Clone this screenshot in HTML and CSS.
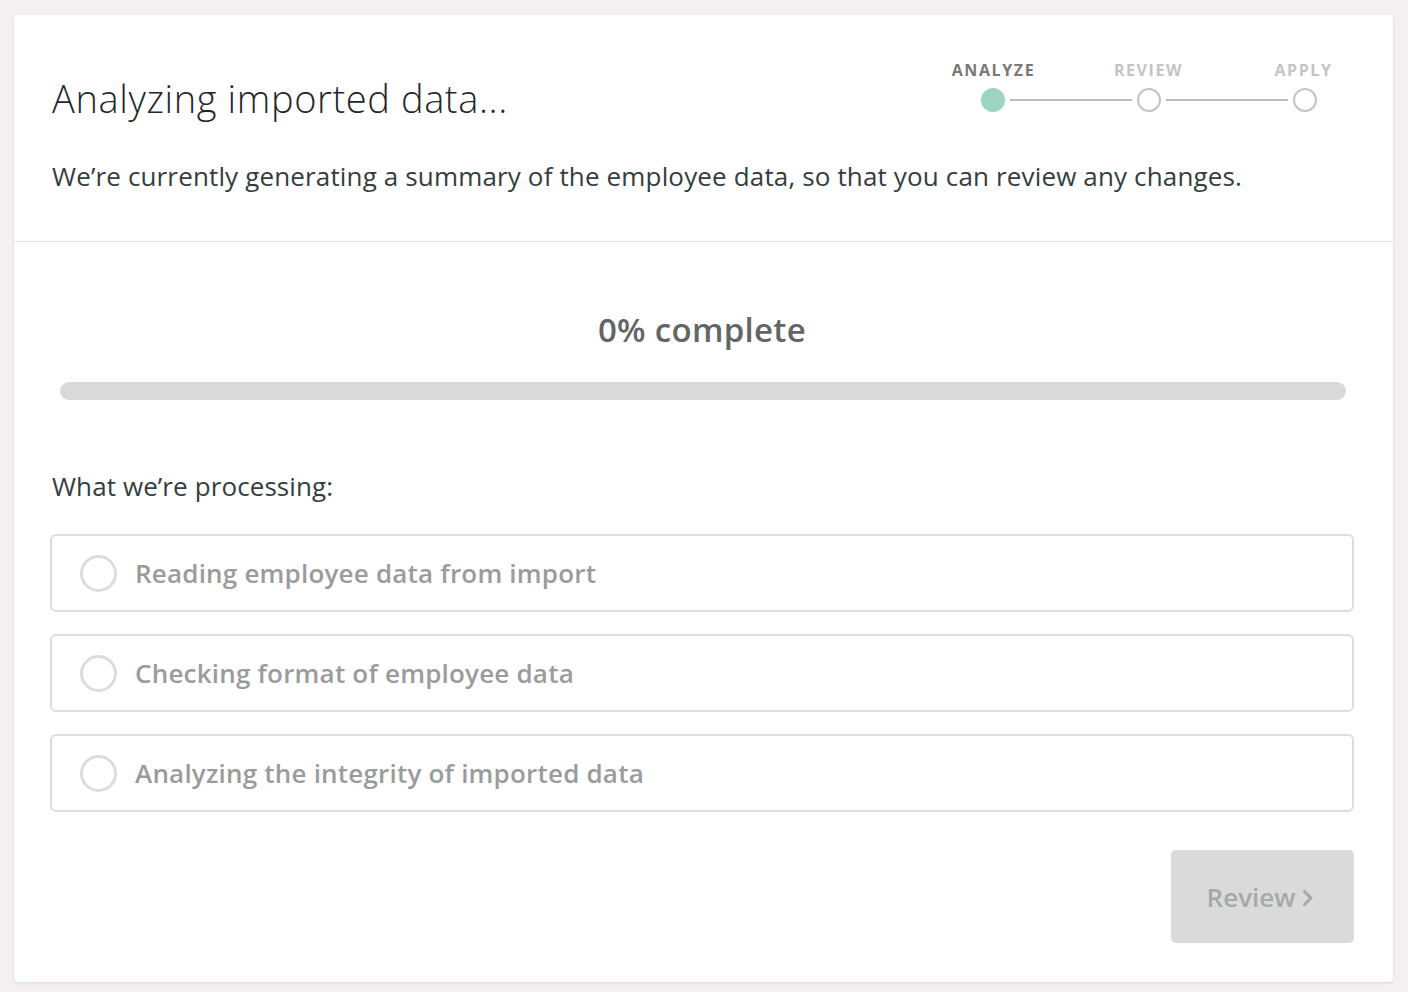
FILE: index.html
```html
<!DOCTYPE html>
<html lang="en">
<head>
<meta charset="utf-8">
<title>Analyzing imported data</title>
<link rel="stylesheet" href="styles.css">
</head>
<body>
<main class="card">
  <header class="head">
    <div class="head-row">
      <h1 class="title">Analyzing imported data...</h1>
      <div class="stepper">
        <div class="labels">
          <span class="label active">ANALYZE</span>
          <span class="label">REVIEW</span>
          <span class="label">APPLY</span>
        </div>
        <div class="dots">
          <span class="dot done"></span>
          <span class="line"></span>
          <span class="dot"></span>
          <span class="line"></span>
          <span class="dot"></span>
        </div>
      </div>
    </div>
    <p class="desc">We’re currently generating a summary of the employee data, so that you can review any changes.</p>
  </header>
  <section class="body">
    <h2 class="pct">0% complete</h2>
    <div class="bar"><div class="fill" style="width:0%"></div></div>
    <p class="what">What we’re processing:</p>
    <ul class="tasks">
      <li class="task"><span class="ring"></span><span>Reading employee data from import</span></li>
      <li class="task"><span class="ring"></span><span>Checking format of employee data</span></li>
      <li class="task"><span class="ring"></span><span>Analyzing the integrity of imported data</span></li>
    </ul>
    <div class="actions">
      <button class="btn" disabled>Review
        <svg class="chev" width="12" height="18" viewBox="0 0 12 18"><path d="M2.5 2.5 L9 9 L2.5 15.5" fill="none" stroke="currentColor" stroke-width="3" stroke-linecap="round" stroke-linejoin="round"/></svg>
      </button>
    </div>
  </section>
</main>
</body>
</html>
```
FILE: styles.css
```css
* { box-sizing: border-box; }
html, body { margin: 0; padding: 0; }
body {
  background: #f3f0ef;
  font-family: "Open Sans", "Liberation Sans", sans-serif;
  padding: 15px 15px 11px 14px;
}
.card {
  background: #fff;
  border-radius: 4px;
  box-shadow: 0 1px 3px rgba(0,0,0,0.12);
}
.head {
  padding: 45px 12px 48px 38px;
  border-bottom: 1px solid #e4e4e4;
}
.head-row {
  display: flex;
  align-items: flex-end;
  justify-content: space-between;
}
.title {
  margin: 0;
  font-size: 38px;
  font-weight: 300;
  line-height: 28px;
  color: #1f2929;
  letter-spacing: 0.6px;
}
.stepper { width: 465px; }
.labels {
  display: grid;
  grid-template-columns: repeat(3, 155px);
  text-align: center;
}
.label {
  font-size: 16px;
  line-height: 20px;
  font-weight: 700;
  letter-spacing: 1.6px;
  color: #c4c4c4;
}
.label.active { color: #787878; }
.dots {
  display: flex;
  align-items: center;
  padding: 8px 64px 0 65px;
}
.dot {
  width: 24px;
  height: 24px;
  border-radius: 50%;
  border: 2px solid #c4c4c4;
  background: #fff;
  flex: none;
}
.dot.done { background: #9dd6c0; border-color: #9dd6c0; }
.line {
  flex: 1;
  height: 1.5px;
  background: #bdbdbd;
  margin: 0 5px;
}
.desc {
  margin: 47px 0 0;
  font-size: 26px;
  font-weight: 400;
  line-height: 34px;
  color: #343e3e;
  letter-spacing: 0.15px;
}
.body {
  padding: 66px 39px 39px 36px;
}
.pct {
  margin: 0;
  text-align: center;
  font-size: 33px;
  line-height: 44px;
  font-weight: 600;
  color: #636666;
  letter-spacing: 0.3px;
}
.bar {
  margin: 30px 8px 0 10px;
  height: 18px;
  border-radius: 9px;
  background: #d9d9d9;
  overflow: hidden;
}
.fill { height: 100%; background: #9dd6c0; }
.what {
  margin: 69px 0 0 2px;
  font-size: 26px;
  font-weight: 400;
  line-height: 34px;
  color: #343e3e;
  letter-spacing: 0.1px;
}
.tasks {
  list-style: none;
  margin: 31px 0 0;
  padding: 0;
  display: flex;
  flex-direction: column;
  gap: 22px;
}
.task {
  height: 78px;
  border: 2px solid #dddddd;
  border-radius: 6px;
  display: flex;
  align-items: center;
  gap: 18px;
  padding: 0 28px;
  font-size: 26px;
  font-weight: 600;
  color: #9a9c9c;
  letter-spacing: 0.2px;
}
.ring {
  width: 37px;
  height: 37px;
  border-radius: 50%;
  border: 3px solid #dcdcdc;
  flex: none;
}
.actions {
  display: flex;
  justify-content: flex-end;
  margin-top: 38px;
}
.btn {
  width: 183px;
  height: 93px;
  border: none;
  border-radius: 5px;
  background: #d9dbdb;
  color: #a6a9a9;
  font-family: inherit;
  font-size: 26px;
  font-weight: 600;
  display: flex;
  align-items: center;
  justify-content: center;
  gap: 7px;
  padding: 0 4px 0 0;
}
.chev { display: block; margin-top: 3px; }
```
